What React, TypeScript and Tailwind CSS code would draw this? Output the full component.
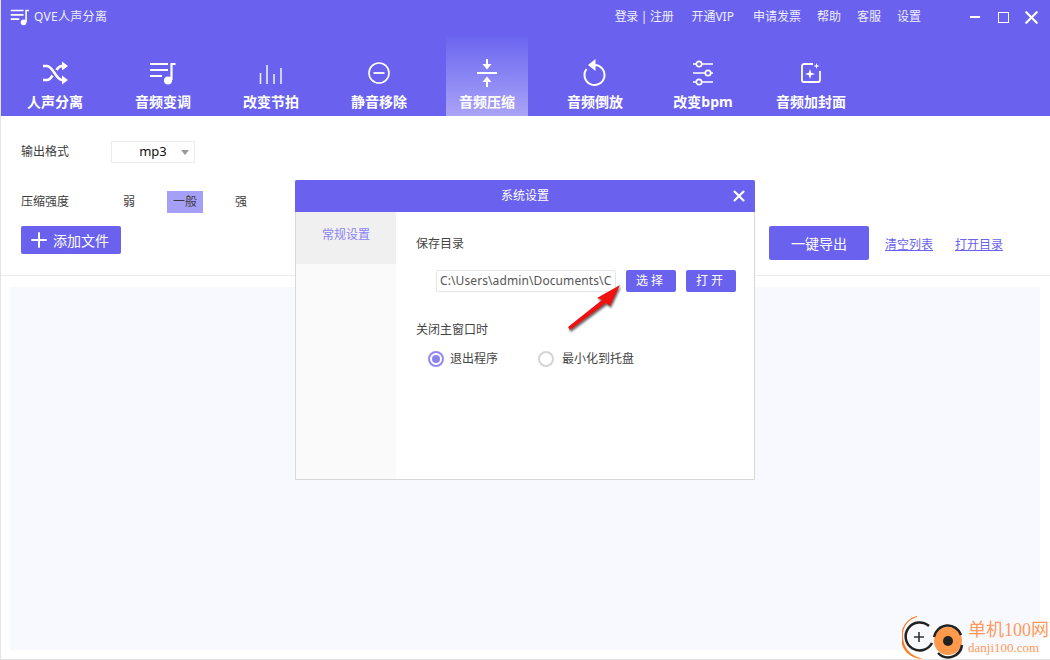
import { Plus, X } from "lucide-react";
import type { ReactNode } from "react";

const FONT = "font-['Noto_Sans','Noto_Sans_CJK_SC',sans-serif]";

function Svg({ size = 28, children }: { size?: number; children: ReactNode }) {
  return (
    <svg
      width={size}
      height={size}
      viewBox="0 0 28 28"
      fill="none"
      stroke="currentColor"
      strokeWidth="2"
      className="block"
    >
      {children}
    </svg>
  );
}

function IconShuffle() {
  return (
    <Svg>
      <path strokeWidth="2.6" d="M2 7h4c6 0 9 14 15 14h3M2 21h4c2.5 0 4-2 5.5-4.5M15.500 11C17 8.500 18.500 7 21 7h3" />
      <path fill="currentColor" stroke="none" d="M21 2.500l6 4.500-6 4.500zM21 16.500l6 4.500-6 4.500z" />
    </Svg>
  );
}

function IconPlaylist({ size = 28 }: { size?: number }) {
  return (
    <Svg size={size}>
      <path strokeWidth="2.2" d="M1 5h18M1 11h18M1 17h12" />
      <path strokeWidth="2.2" d="M22.500 21V5h4" />
      <circle cx="19" cy="21.500" r="4" fill="currentColor" stroke="none" />
    </Svg>
  );
}

function IconBars() {
  return (
    <Svg>
      <path strokeWidth="1.5" stroke="#f0f3ff" d="M3.500 14v11M10 6v19M17 15v10M24 9v16" />
    </Svg>
  );
}

function IconMinusCircle() {
  return (
    <Svg>
      <circle cx="14" cy="14" r="10" strokeWidth="1.6" />
      <path strokeWidth="1.8" d="M8.500 14h11" />
    </Svg>
  );
}

function IconCompress() {
  return (
    <Svg>
      <path strokeWidth="2" d="M4 14h20" />
      <path strokeWidth="2" d="M14 0v6M14 22v6" />
      <path fill="currentColor" stroke="none" d="M9.500 5h9L14 10.500zM9.500 23h9L14 17.500z" />
    </Svg>
  );
}

function IconUndo() {
  return (
    <Svg>
      <path strokeWidth="2" d="M13.500 6A10 10 0 1 1 5.500 10" />
      <path fill="currentColor" stroke="none" d="M14.500 0v12L7 6z" />
    </Svg>
  );
}

function IconSliders() {
  return (
    <Svg>
      <g strokeWidth="1.7">
        <path d="M4 5h3M13 5h11M4 14h12M22 14h2M4 23h3M13 23h11" />
        <circle cx="10" cy="5" r="2.7" />
        <circle cx="19" cy="14" r="2.7" />
        <circle cx="10" cy="23" r="2.7" />
      </g>
    </Svg>
  );
}

function IconCover() {
  return (
    <Svg>
      <path strokeWidth="1.8" d="M16 5H7a2 2 0 0 0-2 2v14a2 2 0 0 0 2 2h14a2 2 0 0 0 2-2v-9" />
      <path fill="currentColor" stroke="none" d="M13 10l1.200 3.800 3.800 1.200-3.800 1.200L13 20l-1.200-3.800L8 15l3.800-1.200zM19.500 4l.7 2.300 2.300.7-2.300.7-.7 2.300-.7-2.300-2.300-.7 2.300-.7z" />
    </Svg>
  );
}

const tabs = [
  { label: "人声分离", icon: <IconShuffle /> },
  { label: "音频变调", icon: <IconPlaylist /> },
  { label: "改变节拍", icon: <IconBars /> },
  { label: "静音移除", icon: <IconMinusCircle /> },
  { label: "音频压缩", icon: <IconCompress />, active: true },
  { label: "音频倒放", icon: <IconUndo /> },
  { label: "改变bpm", icon: <IconSliders /> },
  { label: "音频加封面", icon: <IconCover /> },
];

function Header() {
  return (
    <header className="h-[116px] shrink-0 bg-[#6a62ef] text-white">
      <div className="flex h-[34px] items-center pr-[5px] pl-[9px]">
        <IconPlaylist size={20} />
        <span className="ml-[4px] text-[12px] tracking-[0.3px] text-[#eeeeff]">QVE人声分离</span>
        <nav className="ml-auto flex items-center gap-[16px] text-[12px] text-[#eeeeff]">
          <span className="tracking-[-0.3px]">登录 | 注册</span>
          <span className="ml-[2px]">开通VIP</span>
          <span className="ml-[3px]">申请发票</span>
          <span>帮助</span>
          <span>客服</span>
          <span>设置</span>
        </nav>
        <div className="ml-[40px] flex items-center">
          <span className="flex w-[28px] justify-center">
            <span className="h-[2px] w-[10px] bg-white" />
          </span>
          <span className="flex w-[28px] justify-center">
            <span className="h-[11px] w-[11px] border-[1.5px] border-white" />
          </span>
          <span className="flex w-[28px] justify-center">
            <X size={21} strokeWidth={2.5} />
          </span>
        </div>
      </div>
      <div className="flex h-[82px]">
        {tabs.map((t) => (
          <div key={t.label} className="flex w-[108px] justify-center">
            <div
              className={`flex w-[82px] flex-col items-center pt-[25px] ${
                t.active ? "bg-linear-to-b from-[#6a62ef] to-[#aaa3f6]" : ""
              }`}
            >
              {t.icon}
              <span className="mt-[5px] text-[14px] leading-[20px] font-bold whitespace-nowrap">{t.label}</span>
            </div>
          </div>
        ))}
      </div>
    </header>
  );
}

function Toolbar() {
  return (
    <section className="h-[160px] shrink-0 border-b border-[#ececec] pt-[25px] pl-[20px] text-[12px] text-[#3c3c3c]">
      <div className="flex h-[22px] items-center">
        <span className="w-[90px]">输出格式</span>
        <div className="relative flex h-[22px] w-[84px] items-center justify-center border border-[#ececec]">
          <span className="text-[13px] text-[#111]">mp3</span>
          <span className="absolute top-[8px] right-[5px] h-0 w-0 border-x-[4px] border-t-[5px] border-x-transparent border-t-[#999]" />
        </div>
      </div>
      <div className="mt-[28px] flex h-[22px] items-center">
        <span className="w-[90px]">压缩强度</span>
        <span className="flex h-[22px] w-[36px] items-center justify-center">弱</span>
        <span className="ml-[20px] flex h-[22px] w-[36px] items-center justify-center bg-[#a69ff8]">一般</span>
        <span className="ml-[20px] flex h-[22px] w-[36px] items-center justify-center">强</span>
      </div>
      <div className="mt-[13px] flex items-start">
        <button className="flex h-[28px] w-[100px] items-center justify-start rounded-[2px] bg-[#6a62ef] pl-[6px] text-[14px] text-white">
          <Plus size={24} strokeWidth={2} className="mr-[2px]" />
          添加文件
        </button>
        <button className="ml-[648px] h-[34px] w-[100px] rounded-[2px] bg-[#6a62ef] text-[14px] text-white">一键导出</button>
        <a className="ml-[16px] pt-[10px] text-[12px] leading-[17px] text-[#6a62ef] underline">清空列表</a>
        <a className="ml-[22px] pt-[10px] text-[12px] leading-[17px] text-[#6a62ef] underline">打开目录</a>
      </div>
    </section>
  );
}

function SettingsDialog() {
  return (
    <div className="absolute top-[180px] left-[294px] flex h-[300px] w-[460px] flex-col border border-t-0 border-[#d8d8d8] bg-white text-[12px] text-[#444]">
      <div className="relative -mx-px flex h-[32px] shrink-0 items-center justify-center rounded-t-[2px] bg-[#6a62ef] text-white">
        系统设置
        <X size={18} strokeWidth={2.8} className="absolute top-[7px] right-[7px]" />
      </div>
      <div className="flex min-h-0 flex-1">
        <aside className="w-[100px] shrink-0 bg-[#fafafa]">
          <div className="flex h-[52px] justify-center bg-[#f0f0f0] pt-[14px] leading-[17px] text-[#8b84f3]">常规设置</div>
        </aside>
        <div className="flex-1 pt-[23px] pl-[20px]">
          <div className="leading-[17px]">保存目录</div>
          <div className="mt-[18px] ml-[20px] flex items-center">
            <div className="h-[22px] w-[180px] overflow-hidden rounded-[2px] border border-[#e3e6ea] pl-[3px] leading-[20px] tracking-[0.1px] whitespace-nowrap text-[#555]">
              C:\Users\admin\Documents\C
            </div>
            <button className="ml-[10px] h-[22px] w-[50px] rounded-[2px] bg-[#6a62ef] tracking-[3px] text-white">选择</button>
            <button className="ml-[10px] h-[22px] w-[50px] rounded-[2px] bg-[#6a62ef] tracking-[3px] text-white">打开</button>
          </div>
          <div className="mt-[29px] leading-[17px]">关闭主窗口时</div>
          <div className="mt-[12px] ml-[12px] flex h-[18px] items-center">
            <span className="flex h-[16px] w-[16px] items-center justify-center rounded-full border-2 border-[#9089f5]">
              <span className="h-[8px] w-[8px] rounded-full bg-[#8b84f3]" />
            </span>
            <span className="ml-[6px]">退出程序</span>
            <span className="ml-[40px] h-[16px] w-[16px] rounded-full border-2 border-[#d4d4d4]" />
            <span className="ml-[8px]">最小化到托盘</span>
          </div>
        </div>
      </div>
    </div>
  );
}

function RedArrow() {
  return (
    <svg
      width="70"
      height="60"
      viewBox="0 0 70 60"
      className="absolute top-[280px] left-[559px] drop-shadow-[1px_2px_1px_rgba(0,0,0,0.6)]"
    >
      <path fill="#f01010" d="M8 47L42 20l-5-2L60 5 50 26l-4-3L10 50z" />
    </svg>
  );
}

function Watermark() {
  return (
    <div className="absolute right-0 bottom-0 h-[43px] w-[149px]">
      <div className="absolute top-[13px] right-0 h-[30px] w-[9px] bg-white" />
      <div className="absolute right-0 bottom-0 h-[9px] w-[149px] bg-white" />
      <svg width="64" height="43" viewBox="0 0 64 43" className="absolute top-0 left-[1px]">
        <path fill="#ff7a1a" d="M15 1C5 4 0 12 1 22c1 10 7 17 17 20l3 1C9 43 -1 34 -1 22-1 10 6 2 15 0z" />
        <path fill="none" stroke="#222" strokeWidth="2.5" d="M27 10a14 14 0 1 0 3 17" />
        <path stroke="#333" strokeWidth="1.6" d="M17 16v10M12 21h10" />
        <circle cx="46" cy="25" r="14" fill="#ff9a4d" />
        <path fill="none" stroke="#222" strokeWidth="2.5" d="M32 21a14 14 0 0 1 27-2M36 37a14 14 0 0 0 24-8" />
        <circle cx="46" cy="25" r="5" fill="#222" />
      </svg>
      <div className="absolute top-[3px] left-[67px] font-['Liberation_Serif','Noto_Sans_CJK_SC',serif] whitespace-nowrap text-[#ff9a5c]">
        <div className="text-[18px] leading-[22px]">单机100网</div>
        <div className="text-[13px] leading-[13px]">danji100.com</div>
      </div>
    </div>
  );
}

export default function App() {
  return (
    <div className={`relative flex h-[660px] w-[1050px] flex-col overflow-hidden border-b border-l border-[#e4e4e4] bg-white ${FONT}`}>
      <Header />
      <Toolbar />
      <main className="flex-1 px-[9px] pt-[11px] pb-[9px]">
        <div className="h-full w-[1030px] bg-[#f8f9fe]" />
      </main>
      <SettingsDialog />
      <RedArrow />
      <Watermark />
    </div>
  );
}
